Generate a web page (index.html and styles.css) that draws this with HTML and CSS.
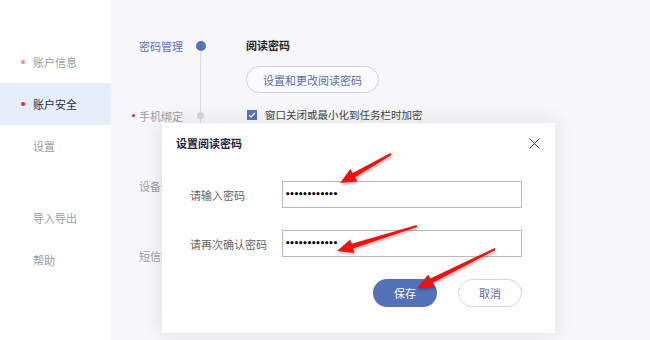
FILE: index.html
```html
<!DOCTYPE html>
<html lang="zh-CN">
<head>
    <meta charset="UTF-8">
    <title>账户安全</title>
    <link rel="stylesheet" href="styles.css">
</head>
<body>
    <div class="app">
        <!-- Sidebar -->
        <div class="sidebar">
            <div class="nav-item"><span class="nav-dot light"></span>账户信息</div>
            <div class="nav-item active"><span class="nav-dot"></span>账户安全</div>
            <div class="nav-item">设置</div>
            <div class="nav-item spaced">导入导出</div>
            <div class="nav-item">帮助</div>
        </div>

        <!-- Main -->
        <div class="main">
            <div class="steps">
                <div class="step">
                    <div class="step-label current">密码管理</div>
                    <div class="rail"><span class="rail-dot big"></span><span class="rail-line"></span></div>
                </div>
                <div class="step">
                    <div class="step-label"><span class="mark"></span>手机绑定</div>
                    <div class="rail"><span class="rail-dot"></span><span class="rail-line"></span></div>
                </div>
                <div class="step">
                    <div class="step-label">设备管理</div>
                    <div class="rail"><span class="rail-dot"></span><span class="rail-line"></span></div>
                </div>
                <div class="step">
                    <div class="step-label">短信提醒</div>
                    <div class="rail"><span class="rail-dot"></span></div>
                </div>
            </div>

            <div class="detail">
                <div class="detail-title">阅读密码</div>
                <button class="outline-btn">设置和更改阅读密码</button>
                <div class="check-row">
                    <span class="checkbox">
                        <svg width="8" height="8" viewBox="0 0 8 8"><path d="M1.2 4.2 L3.2 6 L6.8 2" fill="none" stroke="#fff" stroke-width="1.2"/></svg>
                    </span>
                    窗口关闭或最小化到任务栏时加密
                </div>
            </div>
        </div>
    </div>

    <!-- Dialog -->
    <div class="dialog">
        <div class="dialog-head">
            <span class="dialog-title">设置阅读密码</span>
            <svg class="close" width="11" height="11" viewBox="0 0 11 11"><path d="M0.5 0.5 L10.5 10.5 M10.5 0.5 L0.5 10.5" stroke="#3a3f4a" stroke-width="1"/></svg>
        </div>
        <div class="form-row first">
            <label class="form-label">请输入密码</label>
            <div class="pwd">••••••••••••</div>
        </div>
        <div class="form-row">
            <label class="form-label">请再次确认密码</label>
            <div class="pwd">••••••••••••</div>
        </div>
        <div class="dialog-actions">
            <button class="btn primary">保存</button>
            <button class="btn ghost">取消</button>
        </div>
    </div>

    <!-- red arrows drawn on top -->
    <svg class="arrows" width="650" height="340" viewBox="0 0 650 340">
        <g fill="#ec140f">
            <polygon points="390.5,153.1 352.7,172.9 350.4,169.0 340,183 357.4,181.2 355.1,177.3 391.5,154.9"/>
            <polygon points="416.7,225.0 351.6,243.8 350.2,239.5 337,251 354.4,252.9 353.0,248.6 417.3,227.0"/>
            <polygon points="494.6,248.1 430.2,278.6 428.2,274.5 417,288 434.4,287.1 432.4,283.0 495.4,249.9"/>
        </g>
    </svg>
</body>
</html>
```

FILE: styles.css
```css
body {
    margin: 0;
    font-family: "Noto Sans CJK SC", "Noto Sans", sans-serif;
    font-size: 11px;
    color: #333;
    background: #f7f7f9;
    width: 650px;
    height: 340px;
    overflow: hidden;
    position: relative;
}

.app {
    display: flex;
    height: 340px;
}

/* sidebar */
.sidebar {
    width: 111px;
    background: #fff;
    padding-top: 41px;
    box-sizing: border-box;
}

.nav-item {
    height: 42px;
    line-height: 42px;
    padding-left: 33px;
    color: #9a9ca6;
    position: relative;
}

.nav-item.active {
    background: #e7eefb;
    color: #2c2f38;
}

.nav-item.spaced {
    margin-top: 30px;
}

.nav-dot {
    position: absolute;
    left: 21px;
    top: 19px;
    width: 4px;
    height: 4px;
    border-radius: 50%;
    background: #e0283a;
}

.nav-dot.light {
    background: #f08a90;
}

/* main */
.main {
    flex: 1;
    display: flex;
    padding: 38px 0 0 28px;
}

.steps {
    display: flex;
    flex-direction: column;
}

.step {
    display: flex;
    height: 70px;
}

.step-label {
    width: 56px;
    line-height: 16px;
    color: #9a9ca6;
    white-space: nowrap;
}

.step-label.current {
    color: #5b72b6;
}

.mark {
    display: inline-block;
    width: 3px;
    height: 3px;
    border-radius: 50%;
    background: #e0283a;
    margin-left: -7px;
    margin-right: 4px;
    vertical-align: 4px;
}

.rail {
    width: 11px;
    display: flex;
    flex-direction: column;
    align-items: center;
}

.rail-dot {
    width: 7px;
    height: 7px;
    border-radius: 50%;
    background: #d6d7dc;
    margin-top: 4px;
    flex-shrink: 0;
}

.rail-dot.big {
    width: 10px;
    height: 10px;
    margin-top: 3px;
    background: #5672ba;
}

.rail-line {
    flex: 1;
    width: 1px;
    background: #dcdde2;
    margin-bottom: -4px;
}

.detail {
    margin-left: 40px;
    display: flex;
    flex-direction: column;
    align-items: flex-start;
}

.detail-title {
    line-height: 16px;
    margin-top: -1px;
    font-weight: bold;
    color: #222;
}

.outline-btn {
    margin-top: 13px;
    width: 133px;
    height: 27px;
    border: 1px solid #c9d1ea;
    border-radius: 14px;
    background: #fbfbfd;
    color: #5d6ca8;
    font-family: inherit;
    font-size: 11px;
    padding: 0;
}

.check-row {
    margin-top: 14px;
    line-height: 16px;
    font-size: 10.5px;
    display: flex;
    align-items: center;
    color: #444;
}

.checkbox {
    width: 10px;
    height: 10px;
    background: #5672ba;
    margin: 0 8px 0 1px;
    display: flex;
    align-items: center;
    justify-content: center;
}

/* dialog */
.dialog {
    position: absolute;
    left: 162px;
    top: 123px;
    width: 393px;
    height: 210px;
    background: #fff;
    box-shadow: 0 0 18px rgba(60, 64, 80, 0.14);
    box-sizing: border-box;
    padding: 12px 15px 0 14px;
    display: flex;
    flex-direction: column;
}

.dialog-head {
    display: flex;
    justify-content: space-between;
    align-items: center;
    height: 16px;
}

.dialog-title {
    font-weight: bold;
    color: #1f2340;
}

.form-row {
    display: flex;
    align-items: center;
    margin-top: 22px;
    padding-left: 14px;
}

.form-row.first {
    margin-top: 30px;
}

.form-label {
    width: 92px;
    color: #666;
}

.pwd {
    width: 240px;
    height: 27px;
    box-sizing: border-box;
    border: 1px solid #b9b9bc;
    padding-left: 2px;
    line-height: 25px;
    font-family: "DejaVu Sans", sans-serif;
    font-size: 8.5px;
    font-weight: bold;
    letter-spacing: -1.1px;
    color: #000;
}

.dialog-actions {
    display: flex;
    justify-content: flex-end;
    gap: 21px;
    margin-top: 22px;
    padding-right: 18px;
}

.btn {
    width: 64px;
    height: 28px;
    border-radius: 14px;
    font-family: inherit;
    font-size: 11px;
    padding: 0;
}

.btn.primary {
    background: #5571b7;
    border: none;
    color: #fff;
}

.btn.ghost {
    background: #fff;
    border: 1px solid #cdd6ef;
    color: #5d6ca8;
}

.arrows {
    position: absolute;
    left: 0;
    top: 0;
    pointer-events: none;
    filter: drop-shadow(1px 2px 1px rgba(0, 0, 0, 0.25));
}
```
